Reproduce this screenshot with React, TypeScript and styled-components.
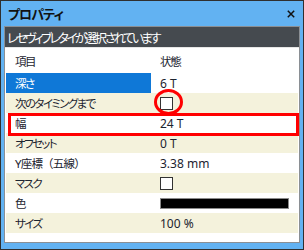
import React from "react";
import styled, { createGlobalStyle } from "styled-components";

const Global = createGlobalStyle`
  html, body { margin: 0; padding: 0; background: #ffffff; }
  * { box-sizing: border-box; }
`;

const Window = styled.div`
  width: 304px;
  height: 250px;
  border: 1px solid #2f2f2f;
  background: #62b2f2;
  display: flex;
  flex-direction: column;
  font-family: "Noto Sans", "Noto Sans CJK JP", sans-serif;
`;

const TitleBar = styled.div`
  height: 25px;
  display: flex;
  align-items: center;
  justify-content: space-between;
  padding: 0 6px 0 7px;
`;

const Title = styled.span`
  font-family: "Noto Sans CJK JP", sans-serif;
  font-weight: 700;
  font-size: 13px;
  font-feature-settings: "palt";
  letter-spacing: -1px;
  color: #111;
  line-height: 1;
`;

const Close = styled.span`
  display: flex;
  width: 12px;
  height: 12px;
  align-items: center;
  justify-content: center;
`;

const Panel = styled.div`
  flex: 1;
  margin: 0 3px 6px 3px;
  border: 1px solid #8a8f94;
  background: #ffffff;
  display: flex;
  flex-direction: column;
`;

const Banner = styled.div`
  height: 21px;
  background: #454a4f;
  border-bottom: 1px solid #e6e6e6;
  color: #ffffff;
  font-family: "Noto Sans CJK JP", sans-serif;
  font-size: 12.5px;
  font-feature-settings: "palt";
  letter-spacing: -2.5px;
  display: flex;
  align-items: center;
  padding-left: 2px;
`;

const Table = styled.div`
  display: flex;
  flex-direction: column;
  padding: 0 1px;
`;

const Row = styled.div<{ $shade?: boolean; $header?: boolean }>`
  position: relative;
  height: ${(p) => (p.$header ? 25 : 20)}px;
  display: grid;
  grid-template-columns: 145px 1fr;
  background: ${(p) => (p.$shade ? "#f4f2dc" : "#ffffff")};
  font-size: 12px;
  color: #1c2430;
`;

const NameCell = styled.div<{ $selected?: boolean; $wide?: boolean }>`
  display: flex;
  align-items: center;
  padding-left: 9px;
  font-size: 11.5px;
  font-feature-settings: ${(p) => (p.$wide ? "normal" : '"palt"')};
  letter-spacing: ${(p) => (p.$wide ? "-0.8px" : "-1.6px")};
  background: ${(p) => (p.$selected ? "#0f78d7" : "transparent")};
  color: ${(p) => (p.$selected ? "#ffffff" : "inherit")};
  white-space: nowrap;
`;

const ValueCell = styled.div<{ $jp?: boolean }>`
  position: relative;
  display: flex;
  align-items: center;
  padding-left: 9px;
  font-size: ${(p) => (p.$jp ? "11.5px" : "12px")};
  letter-spacing: ${(p) => (p.$jp ? "-1.2px" : "0")};
  font-feature-settings: "palt";
  white-space: nowrap;
`;

const CheckBox = styled.span`
  position: relative;
  display: block;
  width: 13px;
  height: 13px;
  border: 1px solid #333;
  background: #fff;
`;

const Circle = styled.span`
  position: absolute;
  left: -7px;
  top: -9px;
  width: 29px;
  height: 26px;
  border: 3px solid #ff0000;
  border-radius: 50%;
`;

const Swatch = styled.span`
  display: block;
  width: 129px;
  height: 11px;
  background: #000;
  border: 1px solid #8a8a8a;
`;

const RedBox = styled.span`
  position: absolute;
  left: 2px;
  right: -1px;
  top: 0;
  height: 23px;
  border: 3px solid #ff0000;
  z-index: 2;
  pointer-events: none;
`;

const XIcon = () => (
  <svg width="8" height="8" viewBox="0 0 8 8">
    <path d="M0.8 0.8 L7.2 7.2 M7.2 0.8 L0.8 7.2" stroke="#111" strokeWidth="1.5" />
  </svg>
);

type Item = {
  name: string;
  value?: string;
  kind?: "text" | "check" | "color";
  shade?: boolean;
  selected?: boolean;
  circled?: boolean;
  boxed?: boolean;
  wide?: boolean;
};

const items: Item[] = [
  { name: "深さ", value: "6 T", selected: true },
  { name: "次のタイミングまで", kind: "check", shade: true, circled: true },
  { name: "幅", value: "24 T", boxed: true },
  { name: "オフセット", value: "0 T", shade: true },
  { name: "Y座標（五線）", value: "3.38 mm", wide: true },
  { name: "マスク", kind: "check", shade: true },
  { name: "色", kind: "color" },
  { name: "サイズ", value: "100 %", shade: true },
];

export default function App() {
  return (
    <>
      <Global />
      <Window>
        <TitleBar>
          <Title>プロパティ</Title>
          <Close>
            <XIcon />
          </Close>
        </TitleBar>
        <Panel>
          <Banner>レセヴィブレタイが選択されています</Banner>
          <Table>
            <Row $header>
              <NameCell>項目</NameCell>
              <ValueCell $jp>状態</ValueCell>
            </Row>
            {items.map((it) => (
              <Row key={it.name} $shade={it.shade}>
                <NameCell $selected={it.selected} $wide={it.wide}>
                  {it.name}
                </NameCell>
                <ValueCell>
                  {it.kind === "check" ? (
                    <CheckBox>{it.circled && <Circle />}</CheckBox>
                  ) : it.kind === "color" ? (
                    <Swatch />
                  ) : (
                    it.value
                  )}
                </ValueCell>
                {it.boxed && <RedBox />}
              </Row>
            ))}
          </Table>
        </Panel>
      </Window>
    </>
  );
}
